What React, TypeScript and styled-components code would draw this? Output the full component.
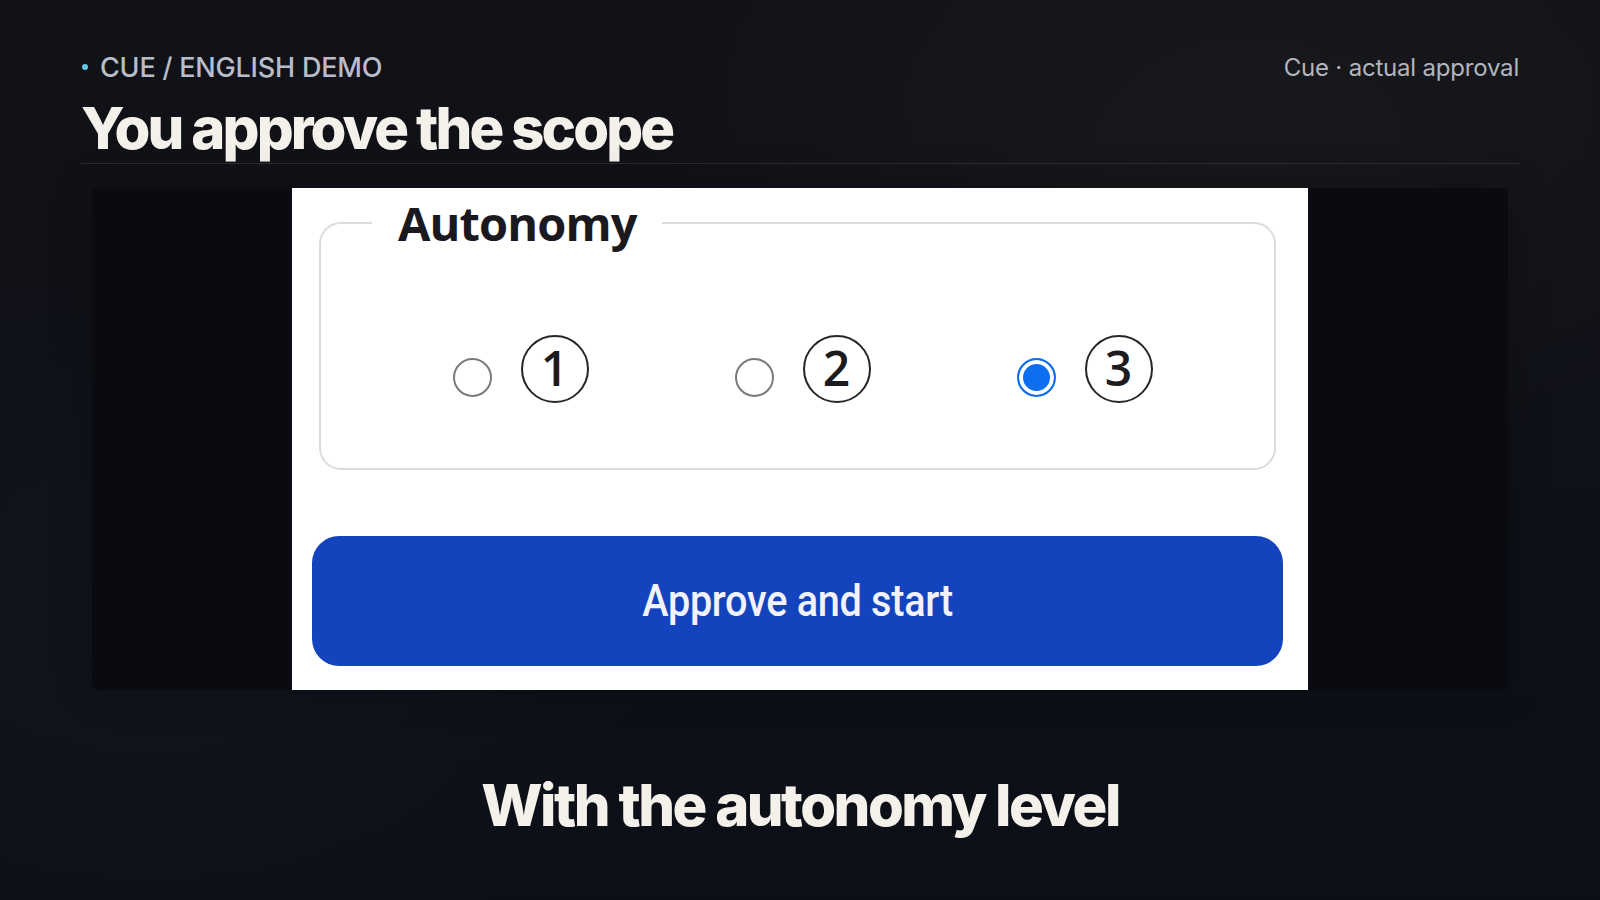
import React from "react";
import styled, { createGlobalStyle } from "styled-components";

const Global = createGlobalStyle`
  html, body { margin: 0; padding: 0; background: #0e1016; }
  * { box-sizing: border-box; }
`;

const Page = styled.div`
  width: 1600px;
  height: 900px;
  overflow: hidden;
  padding: 0 81px;
  display: flex;
  flex-direction: column;
  font-family: Inter, "Liberation Sans", sans-serif;
  background:
    radial-gradient(ellipse 900px 500px at 1250px 120px, rgba(30,30,32,0.55), rgba(30,30,32,0) 70%),
    radial-gradient(ellipse 700px 500px at 150px 650px, rgba(18,24,34,0.6), rgba(18,24,34,0) 70%),
    linear-gradient(180deg, #111217 0%, #0f1118 55%, #0c0f17 100%);
`;

const Header = styled.header`
  display: flex;
  flex-direction: column;
  padding-top: 50px;
  border-bottom: 1px solid #2a2c31;
`;

const TopRow = styled.div`
  display: flex;
  justify-content: space-between;
  align-items: center;
  height: 34px;
`;

const Kicker = styled.div`
  display: flex;
  align-items: center;
  gap: 12px;
  color: #b9bdc9;
  font-size: 27px;
  font-weight: 500;
  letter-spacing: -0.2px;
`;

const Dot = styled.span`
  width: 6px;
  height: 6px;
  border-radius: 50%;
  background: #5fc7e3;
  margin-left: 1px;
`;

const Meta = styled.div`
  color: #b2b5bd;
  font-size: 24px;
  font-weight: 400;
  letter-spacing: -0.2px;
`;

const Title = styled.h1`
  margin: 11px 0 0;
  color: #f4f1ea;
  font-size: 58px;
  font-weight: 800;
  letter-spacing: -2.9px;
  line-height: 66px;
  padding-bottom: 2px;
`;

const Stage = styled.div`
  margin: 24px 11px 0;
  height: 502px;
  background: #090b11;
  border-radius: 6px;
  display: flex;
  justify-content: center;
  box-shadow: 0 0 40px rgba(0,0,0,0.25);
`;

const Card = styled.div`
  width: 1016px;
  height: 502px;
  background: #ffffff;
  display: flex;
  flex-direction: column;
  padding: 5px 25px 24px 20px;
`;

const Fieldset = styled.fieldset`
  margin: 0 7px 0 7px;
  height: 277px;
  border: 2px solid #dcdcdf;
  border-radius: 22px;
  padding: 0;
  display: flex;
  justify-content: center;
  align-items: flex-start;
`;

const Legend = styled.legend`
  margin-left: 51px;
  padding: 0 25px 0 26px;
  font-family: "Open Sans", "Noto Sans", sans-serif;
  font-weight: 700;
  font-size: 47px;
  letter-spacing: -0.9px;
  color: #1a1a1e;
  line-height: 60px;
`;

const Options = styled.div`
  display: flex;
  align-items: flex-start;
  gap: 146px;
  margin-top: 82px;
  margin-left: 10px;
`;

const Option = styled.label`
  display: flex;
  align-items: flex-start;
  gap: 29px;
`;

const Radio = styled.span<{ $checked?: boolean }>`
  width: 39px;
  height: 39px;
  margin-top: 23px;
  border-radius: 50%;
  border: 2.5px solid ${(p) => (p.$checked ? "#0d6ff0" : "#7a7a7e")};
  background: ${(p) => (p.$checked ? "#0d6ff0" : "#fff")};
  box-shadow: ${(p) => (p.$checked ? "inset 0 0 0 4px #fff" : "none")};
`;

const Circled = styled.span`
  width: 68px;
  height: 68px;
  border-radius: 50%;
  border: 2.5px solid #26262a;
  display: flex;
  align-items: center;
  justify-content: center;
  font-family: "Open Sans", "Noto Sans", sans-serif;
  font-size: 48px;
  font-weight: 600;
  color: #1c1c20;
  line-height: 1;
  padding-bottom: 2px;
`;

const Button = styled.button`
  margin-top: 66px;
  height: 130px;
  border: none;
  border-radius: 27px;
  background: #1444bd;
  color: #f2f3fa;
  display: flex;
  align-items: center;
  justify-content: center;
  cursor: pointer;
`;

const ButtonLabel = styled.span`
  font-family: Roboto, "Liberation Sans", sans-serif;
  font-size: 44px;
  font-weight: 500;
  display: inline-block;
  transform: scaleX(0.9);
  letter-spacing: -0.3px;
`;

const Caption = styled.div`
  margin-top: 82px;
  text-align: center;
  color: #f4f1ea;
  font-size: 58px;
  font-weight: 800;
  letter-spacing: -2.5px;
  line-height: 66px;
`;

const options = [
  { n: "1", checked: false },
  { n: "2", checked: false },
  { n: "3", checked: true },
];

export default function App() {
  return (
    <>
      <Global />
      <Page>
        <Header>
          <TopRow>
            <Kicker>
              <Dot />
              CUE / ENGLISH DEMO
            </Kicker>
            <Meta>Cue · actual approval</Meta>
          </TopRow>
          <Title>You approve the scope</Title>
        </Header>
        <Stage>
          <Card>
            <Fieldset>
              <Legend>Autonomy</Legend>
              <Options>
                {options.map((o) => (
                  <Option key={o.n}>
                    <Radio $checked={o.checked} />
                    <Circled>{o.n}</Circled>
                  </Option>
                ))}
              </Options>
            </Fieldset>
            <Button>
              <ButtonLabel>Approve and start</ButtonLabel>
            </Button>
          </Card>
        </Stage>
        <Caption>With the autonomy level</Caption>
      </Page>
    </>
  );
}
